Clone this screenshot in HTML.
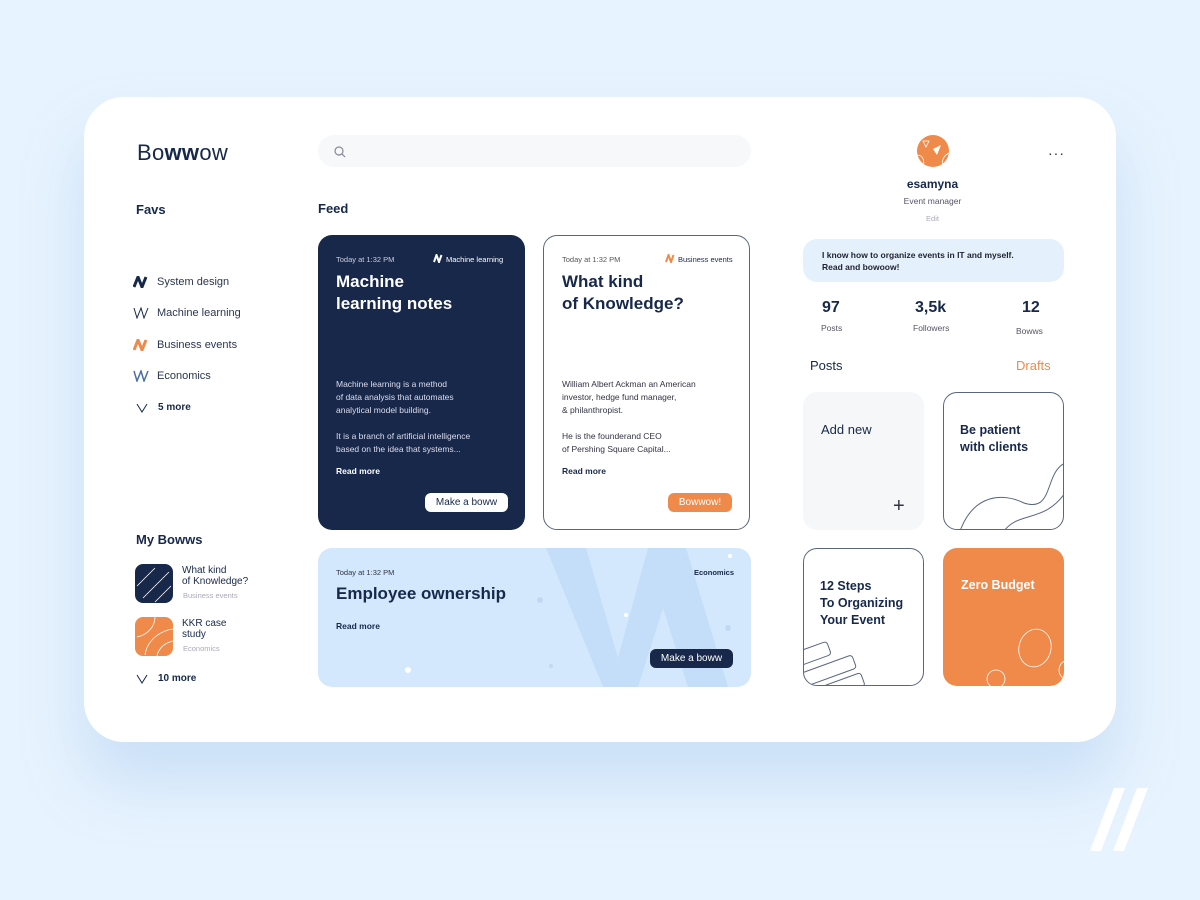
<!DOCTYPE html>
<html><head><meta charset="utf-8"><style>
*{margin:0;padding:0;box-sizing:border-box}
body{width:1200px;height:900px;background:#e7f3fe;font-family:"Liberation Sans",sans-serif;color:#17284a;position:relative;overflow:hidden}
.a{position:absolute}
.card{left:84px;top:97px;width:1032px;height:645px;background:#fff;border-radius:40px;box-shadow:0 40px 60px rgba(150,190,235,.35)}
.b{font-weight:bold}
.t{font-size:11px;color:#2a3550}
.s{font-size:7.5px}
.btn{font-size:10px;border-radius:6px;text-align:center;line-height:19px;height:19px}
.tile{width:121px;height:138px;border-radius:14px}
</style></head><body>
<div class="a card"></div>
<div class="a" style="left:137px;top:140px;font-size:22px;letter-spacing:.3px">Bo<b>ww</b>ow</div>
<div class="a b" style="left:136px;top:202px;font-size:13px">Favs</div>
<svg class="a" style="left:133px;top:276px" width="16" height="12"><path d="M1 11L5 1L9 11L13 1" stroke="#17284a" stroke-width="3" fill="none"/></svg>
<div class="a t" style="left:157px;top:276px">System design</div>
<svg class="a" style="left:133px;top:307px" width="16" height="12"><path d="M1 1L4 11L8 1L11 11L15 1" stroke="#17284a" stroke-width="1" fill="none"/></svg>
<div class="a t" style="left:157px;top:307px">Machine learning</div>
<svg class="a" style="left:133px;top:339px" width="16" height="12"><path d="M1 11L5 1L9 11L13 1" stroke="#ef8a4b" stroke-width="3" fill="none"/></svg>
<div class="a t" style="left:157px;top:339px">Business events</div>
<svg class="a" style="left:133px;top:370px" width="16" height="12"><path d="M1 1L4 11L8 1L11 11L15 1" stroke="#4a6fa8" stroke-width="1.5" fill="none"/></svg>
<div class="a t" style="left:157px;top:370px">Economics</div>
<svg class="a" style="left:136px;top:403px" width="14" height="10"><path d="M1 1L6 9L11 1" stroke="#17284a" stroke-width="1" fill="none"/></svg>
<div class="a b" style="left:158px;top:402px;font-size:10px">5 more</div>
<div class="a b" style="left:136px;top:532px;font-size:13px">My Bowws</div>
<div class="a" style="left:135px;top:564px;width:38px;height:39px;border-radius:8px;background:#17284a;overflow:hidden"><svg width="38" height="39"><path d="M2 22L20 4M8 34L34 8M20 38L36 22" stroke="#fff" stroke-width=".8"/></svg></div>
<div class="a" style="left:182px;top:565px;font-size:10px;line-height:11px">What kind<br>of Knowledge?</div>
<div class="a" style="left:183px;top:591px;font-size:7.5px;color:#aab">Business events</div>
<div class="a" style="left:135px;top:617px;width:38px;height:39px;border-radius:8px;background:#ef8a4b;overflow:hidden"><svg width="38" height="39"><path d="M10 38C12 24 24 14 38 12M20 0C20 10 12 18 2 20M22 39C24 30 30 26 38 24" stroke="#fff" stroke-width=".8" fill="none"/></svg></div>
<div class="a" style="left:182px;top:618px;font-size:10px;line-height:11px">KKR case<br>study</div>
<div class="a" style="left:183px;top:644px;font-size:7.5px;color:#aab">Economics</div>
<svg class="a" style="left:136px;top:674px" width="14" height="10"><path d="M1 1L6 9L11 1" stroke="#17284a" stroke-width="1" fill="none"/></svg>
<div class="a b" style="left:158px;top:673px;font-size:10px">10 more</div>

<div class="a" style="left:318px;top:135px;width:433px;height:32px;border-radius:16px;background:#f7f8f9"></div>
<svg class="a" style="left:333px;top:145px" width="14" height="14"><circle cx="6" cy="6" r="4" stroke="#889" stroke-width="1.2" fill="none"/><path d="M9 9L12 12" stroke="#889" stroke-width="1.2"/></svg>
<div class="a b" style="left:318px;top:201px;font-size:13px">Feed</div>

<div class="a" style="left:318px;top:235px;width:207px;height:295px;border-radius:14px;background:#17284a;color:#fff">
<div class="a s" style="left:18px;top:20px;color:#ccd">Today at 1:32 PM</div>
<svg class="a" style="left:115px;top:19px" width="11" height="9"><path d="M1 8L3.5 1L6 8L8.5 1" stroke="#fff" stroke-width="2" fill="none"/></svg>
<div class="a s" style="left:128px;top:20px">Machine learning</div>
<div class="a b" style="left:18px;top:36px;font-size:17px;line-height:22px">Machine<br>learning notes</div>
<div class="a" style="left:18px;top:143px;font-size:8.5px;line-height:13px;color:#dde">Machine learning is a method<br>of data analysis that automates<br>analytical model building.<br><br>It is a branch of artificial intelligence<br>based on the idea that systems...</div>
<div class="a b" style="left:18px;top:231px;font-size:8.5px">Read more</div>
<div class="a btn" style="left:107px;top:258px;width:83px;background:#fff;color:#17284a">Make a boww</div>
</div>

<div class="a" style="left:543px;top:235px;width:207px;height:295px;border-radius:14px;border:1px solid #5a6680;background:#fff">
<div class="a s" style="left:18px;top:19px;color:#555">Today at 1:32 PM</div>
<svg class="a" style="left:121px;top:18px" width="11" height="9"><path d="M1 8L3.5 1L6 8L8.5 1" stroke="#ef8a4b" stroke-width="2" fill="none"/></svg>
<div class="a s" style="left:134px;top:19px">Business events</div>
<div class="a b" style="left:18px;top:35px;font-size:17px;line-height:22px">What kind<br>of Knowledge?</div>
<div class="a" style="left:18px;top:142px;font-size:8.5px;line-height:13px;color:#334">William Albert Ackman an American<br>investor, hedge fund manager,<br>&amp; philanthropist.<br><br>He is the founderand CEO<br>of Pershing Square Capital...</div>
<div class="a b" style="left:18px;top:230px;font-size:8.5px">Read more</div>
<div class="a btn" style="left:124px;top:257px;width:64px;background:#ef8a4b;color:#fff">Bowwow!</div>
</div>

<div class="a" style="left:318px;top:548px;width:433px;height:139px;border-radius:14px;background:#d3e8fd;overflow:hidden">
<svg class="a" style="left:0;top:0" width="433" height="139"><path d="M228 0L268 0L300 110L330 0L368 0L410 139L370 139L345 60L320 139L285 139Z" fill="#c4ddf8"/><circle cx="90" cy="122" r="3" fill="#fff"/><circle cx="308" cy="67" r="2" fill="#fff"/><circle cx="222" cy="52" r="3" fill="#c0d8f2"/><circle cx="410" cy="80" r="3" fill="#c0d8f2"/><circle cx="233" cy="118" r="2" fill="#c0d8f2"/><circle cx="412" cy="8" r="2" fill="#fff"/></svg>
<div class="a s" style="left:18px;top:20px;color:#334">Today at 1:32 PM</div>
<div class="a s b" style="right:17px;top:20px">Economics</div>
<div class="a b" style="left:18px;top:36px;font-size:17px">Employee ownership</div>
<div class="a b" style="left:18px;top:73px;font-size:8.5px">Read more</div>
<div class="a btn" style="left:332px;top:101px;width:83px;background:#17284a;color:#fff">Make a boww</div>
</div>

<div class="a" style="left:917px;top:135px;width:32px;height:32px;border-radius:50%;background:#ef8a4b;overflow:hidden"><svg width="32" height="32"><path d="M6 6L12 6L9 12Z M0 20C6 20 8 26 6 32 M26 32C24 24 28 20 32 18" stroke="#fff" stroke-width=".8" fill="none"/><path d="M16 14L24 10L20 20Z" fill="#fff"/></svg></div>
<div class="a" style="left:1048px;top:145px;font-size:14px;letter-spacing:1px">···</div>
<div class="a b" style="left:860px;top:177px;width:145px;text-align:center;font-size:12px">esamyna</div>
<div class="a" style="left:860px;top:196px;width:145px;text-align:center;font-size:8.5px;color:#556">Event manager</div>
<div class="a" style="left:860px;top:214px;width:145px;text-align:center;font-size:7.5px;color:#aab">Edit</div>
<div class="a" style="left:803px;top:239px;width:261px;height:43px;border-radius:14px;background:#e4f1fd"></div>
<div class="a b" style="left:822px;top:249px;font-size:8.5px;line-height:12px;color:#223">I know how to organize events in IT and myself.<br>Read and bowoow!</div>
<div class="a b" style="left:822px;top:299px;font-size:16px">97</div>
<div class="a" style="left:821px;top:323px;font-size:8.5px;color:#556">Posts</div>
<div class="a b" style="left:915px;top:299px;font-size:16px">3,5k</div>
<div class="a" style="left:913px;top:323px;font-size:8.5px;color:#556">Followers</div>
<div class="a b" style="left:1022px;top:299px;font-size:16px">12</div>
<div class="a" style="left:1016px;top:326px;font-size:8.5px;color:#556">Bowws</div>
<div class="a" style="left:810px;top:358px;font-size:13px">Posts</div>
<div class="a" style="left:1016px;top:358px;font-size:13px;color:#ef8a4b">Drafts</div>

<div class="a tile" style="left:803px;top:392px;background:#f6f7f8"></div>
<div class="a" style="left:821px;top:422px;font-size:13px">Add new</div>
<div class="a" style="left:893px;top:495px;font-size:20px;font-weight:200;color:#334">+</div>
<div class="a tile" style="left:943px;top:392px;border:1px solid #5a6680;overflow:hidden"><svg width="121" height="138"><path d="M16 138C30 100 60 100 80 110C110 120 100 80 121 70M60 138C75 118 100 130 121 100" stroke="#5a6680" fill="none"/></svg></div>
<div class="a b" style="left:960px;top:422px;font-size:12.5px;line-height:17px">Be patient<br>with clients</div>
<div class="a tile" style="left:803px;top:548px;border:1px solid #5a6680;overflow:hidden"><svg width="121" height="138"><g stroke="#5a6680" fill="none"><rect x="-10" y="98" width="36" height="14" rx="3" transform="rotate(-20 8 105)"/><rect x="-10" y="116" width="62" height="14" rx="3" transform="rotate(-20 21 123)"/><rect x="20" y="130" width="40" height="14" rx="3" transform="rotate(-20 40 137)"/></g></svg></div>
<div class="a b" style="left:820px;top:578px;font-size:12.5px;line-height:17px">12 Steps<br>To Organizing<br>Your Event</div>
<div class="a tile" style="left:943px;top:548px;background:#ef8a4b;overflow:hidden"><svg width="121" height="138"><g stroke="#fff" fill="none" stroke-width=".8"><ellipse cx="92" cy="100" rx="16" ry="19" transform="rotate(15 92 100)"/><circle cx="53" cy="131" r="9"/><circle cx="126" cy="122" r="10"/></g></svg></div>
<div class="a b" style="left:961px;top:578px;font-size:12.5px;color:#fff">Zero Budget</div>

<svg class="a" style="left:1085px;top:787px" width="70" height="66"><path d="M5 64L16 64L40 1L29 1Z M28 64L39 64L63 1L52 1Z" fill="#fff"/></svg>
</body></html>
